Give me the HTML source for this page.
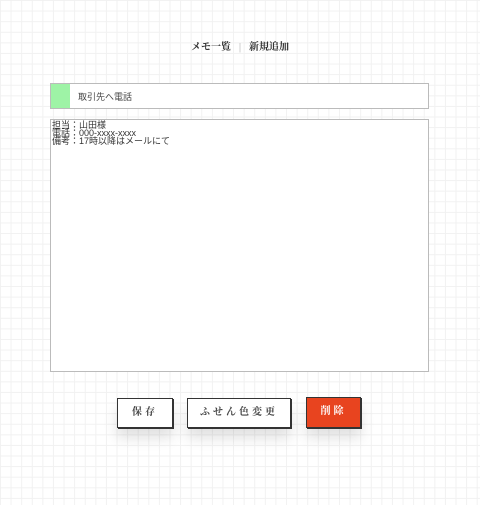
<!DOCTYPE html>
<html><head><meta charset="utf-8"><style>
body{margin:0;width:480px;height:505px;overflow:hidden;background-color:#fff;
background-image:linear-gradient(#f1f1f1 1px,transparent 1px),linear-gradient(90deg,#f1f1f1 1px,transparent 1px);
background-size:10.6px 10.6px;background-position:0 0;font-family:"Liberation Sans","Noto Sans CJK JP",sans-serif;position:relative}
.nav{position:absolute;top:38px;left:0;width:480px;text-align:center;font-family:"Liberation Serif","Noto Serif CJK SC",serif;font-size:10px;color:#333;font-weight:bold}
.nav .sep{color:#aaa;margin:0 8px;font-weight:normal}
.title{position:absolute;left:50px;top:83px;width:379px;height:26px;background:#fff;border:1px solid #bbb;box-sizing:border-box}
.title .g{position:absolute;left:0;top:0;width:19px;height:24px;background:#9ef3a6}
.title span{position:absolute;left:27px;top:6px;font-size:9px;color:#444}
.ta{position:absolute;left:50px;top:119px;width:379px;height:253px;box-sizing:border-box;background:#fff;border:1px solid #bbb;font-size:9px;line-height:8px;color:#333;padding:1px 1px}
.btn{position:absolute;border:1.5px solid #333;background:#fff;box-shadow:1px 1px 0 #333,0 10px 14px rgba(0,0,0,0.12);font-family:"Liberation Serif","Noto Serif CJK SC",serif;font-size:10px;font-weight:bold;letter-spacing:3px;color:#444;text-align:center;box-sizing:border-box}
</style></head><body>
<div class="nav">メモ一覧<span class="sep">|</span>新規追加</div>
<div class="title"><div class="g"></div><span>取引先へ電話</span></div>
<div class="ta">担当：山田様<br>電話：000-xxxx-xxxx<br>備考：17時以降はメールにて</div>
<div class="btn" style="left:117px;top:398px;width:56px;height:30px;line-height:27px">保存</div>
<div class="btn" style="left:187px;top:398px;width:104px;height:30px;line-height:27px">ふせん色変更</div>
<div class="btn" style="left:306px;top:397px;width:55px;height:31px;line-height:28px;background:#e8441f;color:#fff">削除</div>
</body></html>
